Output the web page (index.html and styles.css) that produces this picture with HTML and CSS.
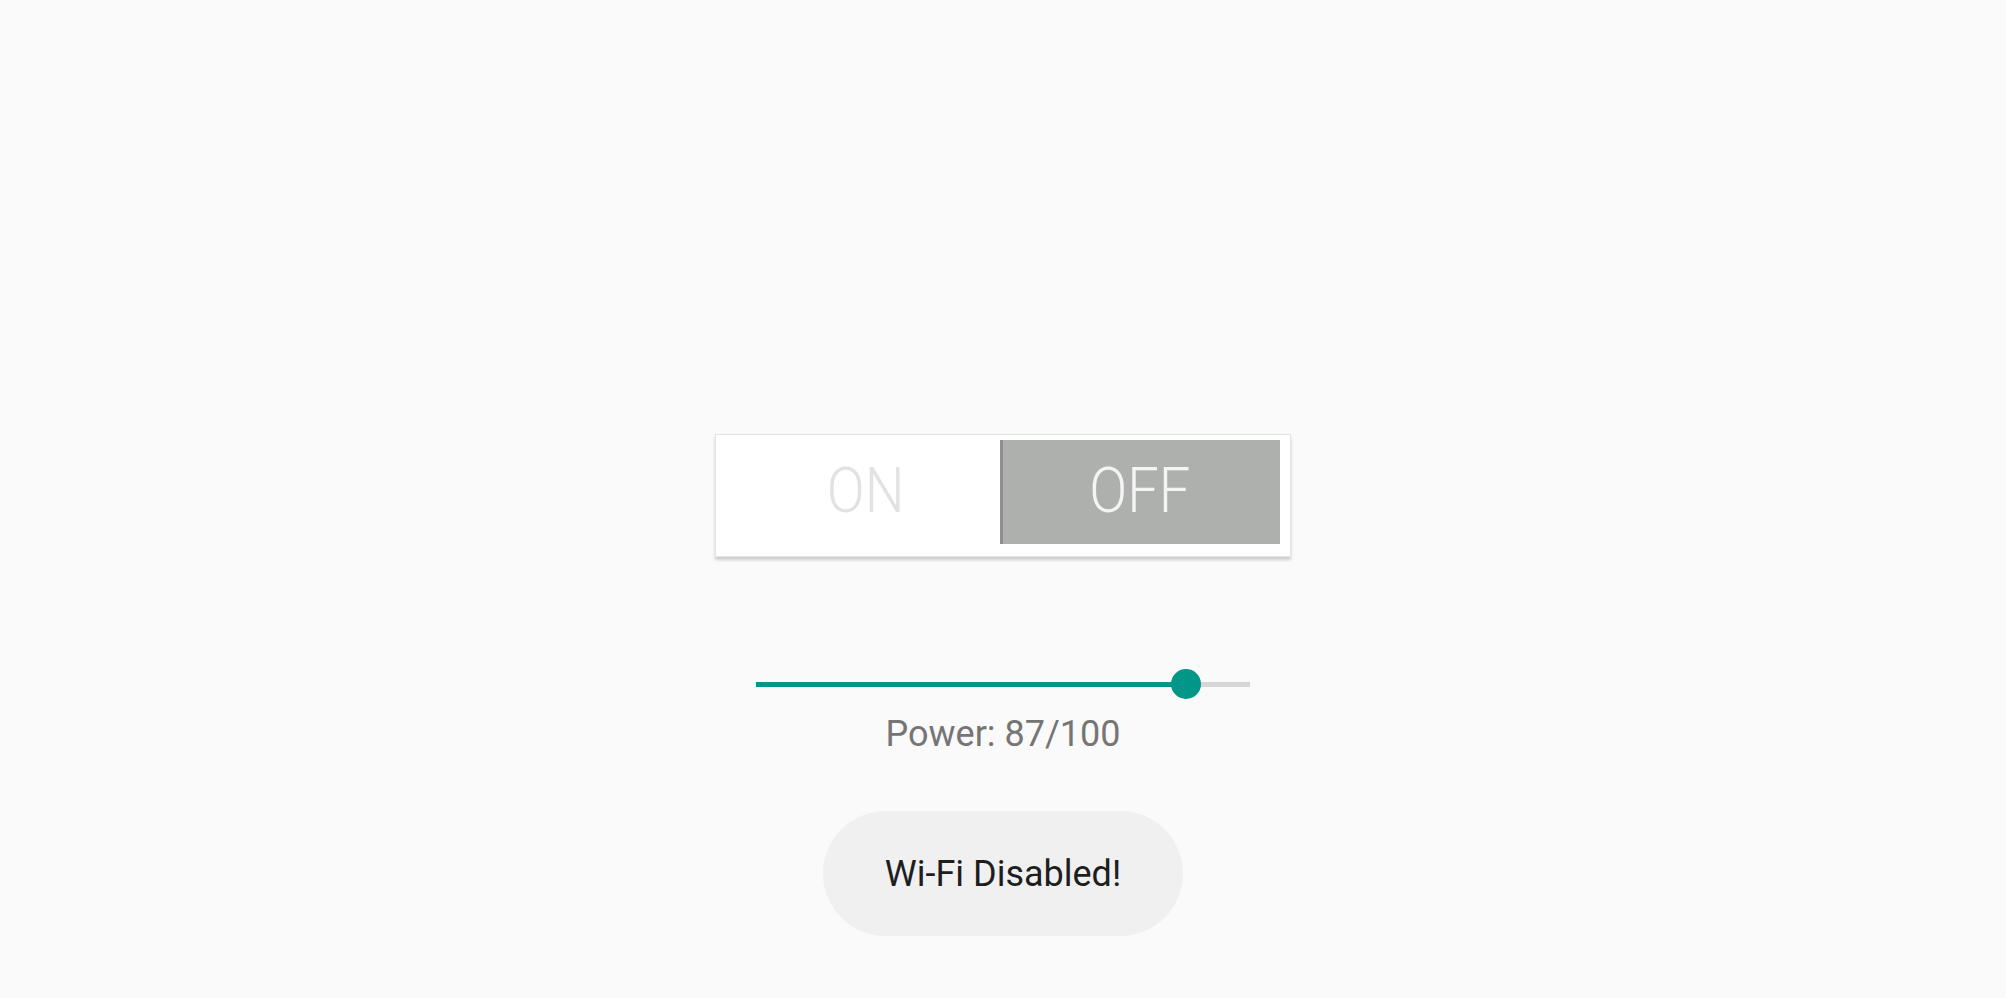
FILE: index.html
```html
<!DOCTYPE html>
<html lang="en">
<head>
    <meta charset="UTF-8">
    <meta name="viewport" content="width=device-width, initial-scale=1.0">
    <title>Wi-Fi Power</title>
    <link rel="stylesheet" href="styles.css">
</head>
<body>
    <div class="screen">
        <div class="toggle">
            <div class="toggle-half toggle-on"><span class="toggle-text">ON</span></div>
            <div class="toggle-half toggle-off"><span class="toggle-text">OFF</span></div>
        </div>

        <div class="slider">
            <div class="track">
                <div class="track-fill" style="width: 87%;"></div>
            </div>
            <div class="thumb" style="left: 87%;"></div>
        </div>

        <div class="power-label">Power: 87/100</div>

        <div class="toast">Wi-Fi Disabled!</div>
    </div>
</body>
</html>
```

FILE: styles.css
```css
body {
    margin: 0;
    background: #fafafa;
    font-family: Roboto, "Noto Sans", sans-serif;
}

.screen {
    min-height: 998px;
    display: flex;
    flex-direction: column;
    align-items: center;
    padding-top: 434px;
    box-sizing: border-box;
}

.toggle {
    display: flex;
    background: #ffffff;
    border: 1px solid #e4e4e4;
    padding: 5px 10px 12px 4px;
    box-shadow: 0 3px 3px rgba(0,0,0,0.18);
}

.toggle-half {
    width: 280px;
    height: 104px;
    display: flex;
    align-items: center;
    justify-content: center;
    font-size: 63px;
    font-weight: 300;
    padding-bottom: 4px;
    box-sizing: border-box;
}

.toggle-text {
    display: inline-block;
    transform: scaleX(0.89);
}

.toggle-on {
    color: #e2e2e2;
    padding-left: 12px;
}

.toggle-off {
    background: #aeb0ae;
    border-left: 3px solid #8e908e;
    padding-right: 4px;
    color: #f4f4f4;
}

.slider {
    position: relative;
    width: 494px;
    height: 30px;
    margin-top: 112px;
    display: flex;
    align-items: center;
}

.track {
    width: 100%;
    height: 5px;
    background: #d6d6d6;
}

.track-fill {
    height: 100%;
    background: #009688;
}

.thumb {
    position: absolute;
    top: 0;
    width: 30px;
    height: 30px;
    margin-left: -15px;
    border-radius: 50%;
    background: #009688;
}

.power-label {
    margin-top: 15px;
    font-size: 36px;
    line-height: 41px;
    color: #757575;
}

.toast {
    margin-top: 56px;
    width: 360px;
    height: 125px;
    border-radius: 63px;
    background: #f0f0f0;
    display: flex;
    align-items: center;
    justify-content: center;
    font-size: 36px;
    color: #1e1e1e;
}
```
